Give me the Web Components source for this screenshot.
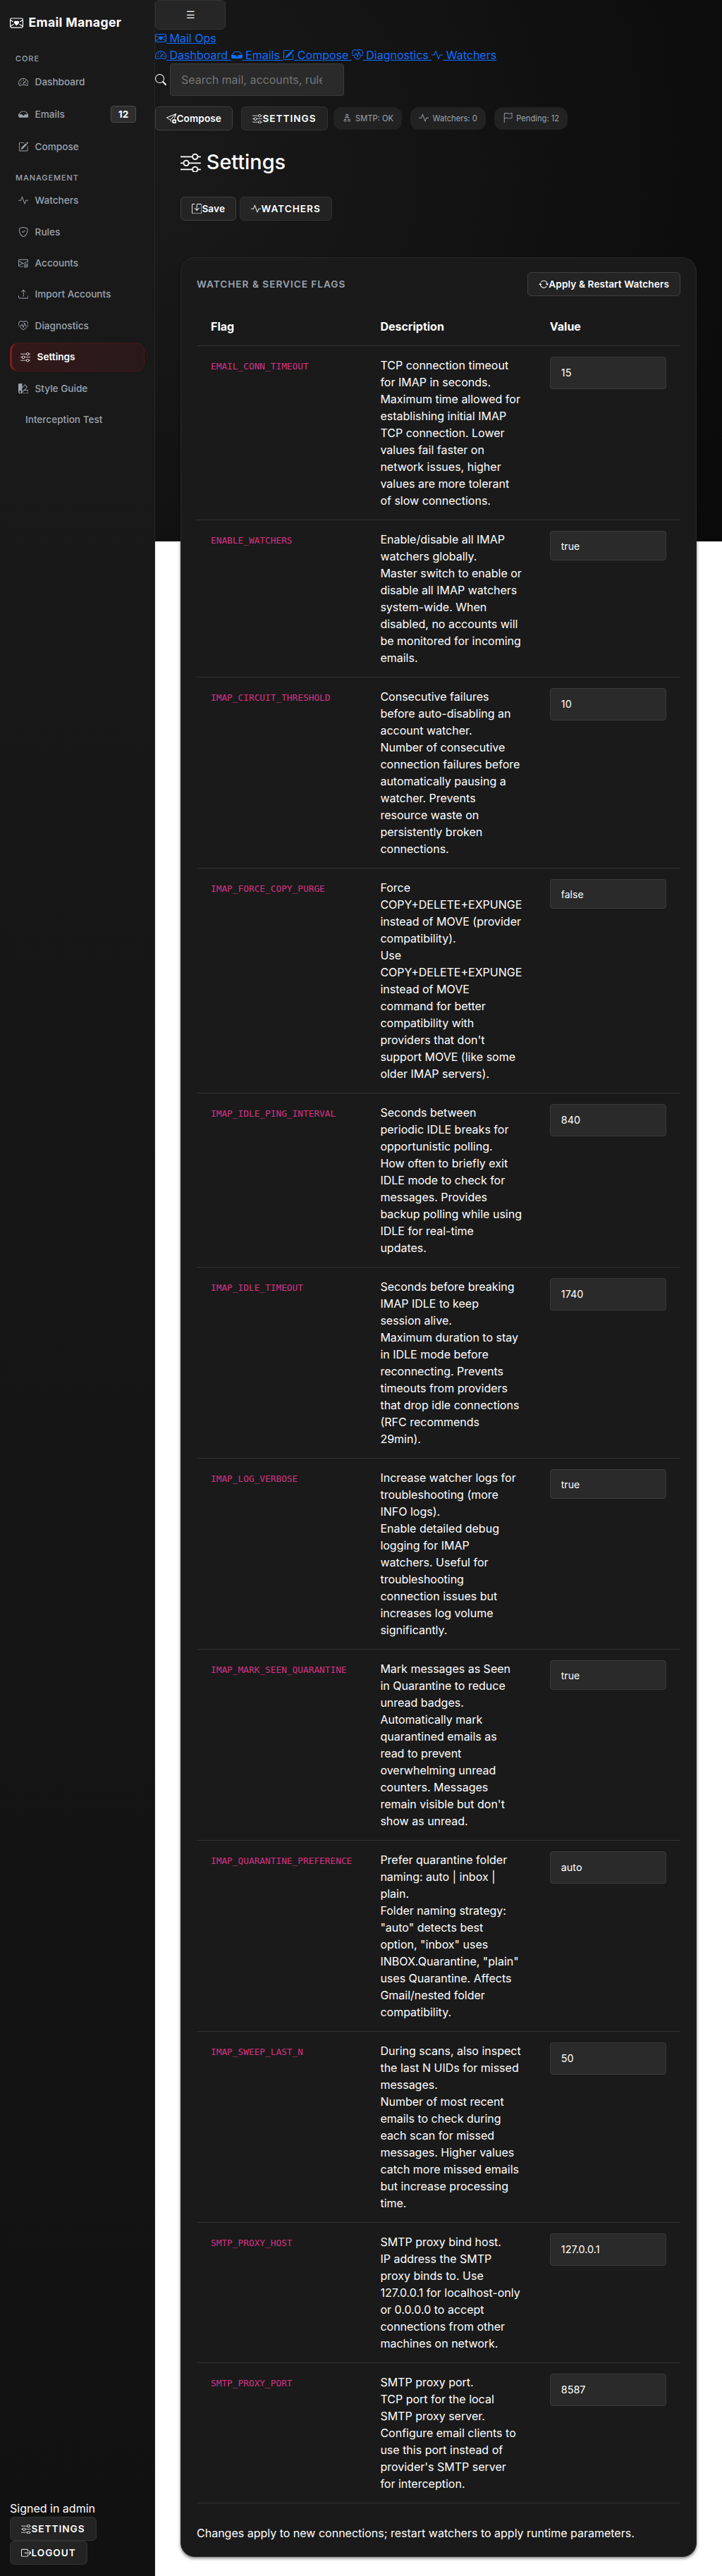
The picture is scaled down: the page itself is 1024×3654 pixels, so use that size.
<!DOCTYPE html>
<html lang="en">
<head>
<meta charset="utf-8">
<title>Email Manager - Settings</title>
<style>
html{background:#fff}
body{margin:0;font-family:Inter,"Liberation Sans",sans-serif;font-size:16px;line-height:24px;color:#fff}
</style>
</head>
<body>
<mail-app></mail-app>
<script>
const ICONS={
speed:'<path d="M8 4a.5.5 0 0 1 .5.5V6a.5.5 0 0 1-1 0V4.500A.5.5 0 0 1 8 4zM3.732 5.732a.5.5 0 0 1 .707 0l.915.914a.5.5 0 1 1-.708.708l-.914-.915a.5.5 0 0 1 0-.707zM2 10a.5.5 0 0 1 .5-.5h1.586a.5.5 0 0 1 0 1H2.500A.5.5 0 0 1 2 10zm9.5 0a.5.5 0 0 1 .5-.5h1.5a.5.5 0 0 1 0 1H12a.5.5 0 0 1-.5-.5zm.754-4.246a.389.389 0 0 0-.527-.02L7.547 9.31a.91.91 0 1 0 1.302 1.258l3.434-4.297a.389.389 0 0 0-.029-.518z"/><path fill-rule="evenodd" d="M0 10a8 8 0 1 1 15.547 2.661c-.442 1.253-1.845 1.602-2.932 1.25C11.309 13.488 9.475 13 8 13c-1.474 0-3.31.488-4.615.911-1.087.352-2.49.003-2.932-1.25A7.988 7.988 0 0 1 0 10zm8-7a7 7 0 0 0-6.603 9.329c.203.575.923.876 1.68.63C4.397 12.533 6.358 12 8 12s3.604.532 4.923.96c.757.245 1.477-.056 1.68-.631A7 7 0 0 0 8 3z"/>',
inbox:'<path d="M4.98 4a.5.5 0 0 0-.39.188L1.54 8H6a.5.5 0 0 1 .5.5 1.5 1.5 0 1 0 3 0A.5.5 0 0 1 10 8h4.46l-3.05-3.812A.5.5 0 0 0 11.02 4zm-1.17-.437A1.5 1.5 0 0 1 4.98 3h6.04a1.5 1.5 0 0 1 1.17.563l3.7 4.625a.5.5 0 0 1 .106.374l-.39 3.124A1.5 1.5 0 0 1 14.117 13H1.883a1.5 1.5 0 0 1-1.489-1.314l-.39-3.124a.5.5 0 0 1 .106-.374z"/>',
pencil:'<path d="M15.502 1.94a.5.5 0 0 1 0 .706L14.459 3.69l-2-2L13.502.646a.5.5 0 0 1 .707 0l1.293 1.293zm-1.75 2.456-2-2L4.939 9.21a.5.5 0 0 0-.121.196l-.805 2.414a.25.25 0 0 0 .316.316l2.414-.805a.5.5 0 0 0 .196-.12l6.813-6.814z"/><path fill-rule="evenodd" d="M1 13.5A1.5 1.5 0 0 0 2.5 15h11a1.5 1.5 0 0 0 1.5-1.5v-6a.5.5 0 0 0-1 0v6a.5.5 0 0 1-.5.5h-11a.5.5 0 0 1-.5-.5v-11a.5.5 0 0 1 .5-.5H9a.5.5 0 0 0 0-1H2.5A1.5 1.5 0 0 0 1 2.5v11z"/>',
activity:'<path fill-rule="evenodd" d="M6 2a.5.5 0 0 1 .47.33L10 12.036l1.53-4.208A.5.5 0 0 1 12 7.5h3.5a.5.5 0 0 1 0 1h-3.15l-1.88 5.17a.5.5 0 0 1-.94 0L6 3.964 4.47 8.171A.5.5 0 0 1 4 8.500H.5a.5.5 0 0 1 0-1h3.15l1.88-5.17A.5.5 0 0 1 6 2"/>',
shield:'<path d="M5.338 1.59a61.44 61.44 0 0 0-2.837.856.481.481 0 0 0-.328.39c-.554 4.157.726 7.19 2.253 9.188a10.725 10.725 0 0 0 2.287 2.233c.346.244.652.42.893.533.12.057.218.095.293.118a.55.55 0 0 0 .101.025.615.615 0 0 0 .1-.025c.076-.023.174-.061.294-.118.24-.113.547-.29.893-.533a10.726 10.726 0 0 0 2.287-2.233c1.527-1.997 2.807-5.031 2.253-9.188a.48.48 0 0 0-.328-.39c-.651-.213-1.75-.56-2.837-.855C9.552 1.29 8.531 1.067 8 1.067c-.53 0-1.552.223-2.662.524zM5.072.56C6.157.265 7.31 0 8 0s1.843.265 2.928.56c1.11.3 2.229.655 2.887.87a1.54 1.54 0 0 1 1.044 1.262c.596 4.477-.787 7.795-2.465 9.99a11.775 11.775 0 0 1-2.517 2.453 7.159 7.159 0 0 1-1.048.625c-.28.132-.581.24-.829.24s-.548-.108-.829-.24a7.158 7.158 0 0 1-1.048-.625 11.777 11.777 0 0 1-2.517-2.453C1.928 10.487.545 7.169 1.141 2.692A1.54 1.54 0 0 1 2.185 1.43 62.456 62.456 0 0 1 5.072.56z"/><path d="M10.854 5.146a.5.5 0 0 1 0 .708l-3 3a.5.5 0 0 1-.708 0l-1.5-1.5a.5.5 0 1 1 .708-.708L7.5 7.793l2.646-2.647a.5.5 0 0 1 .708 0z"/>',
at:'<path d="M2 2a2 2 0 0 0-2 2v8.010A2 2 0 0 0 2 14h5.5a.5.5 0 0 0 0-1H2a1 1 0 0 1-.966-.741l5.64-3.471L8 9.583l7-4.2V8.500a.5.5 0 0 0 1 0V4a2 2 0 0 0-2-2zm3.708 6.208L1 11.105V5.383zM1 4.217V4a1 1 0 0 1 1-1h12a1 1 0 0 1 1 1v.217l-7 4.2z"/><path d="M14.247 14.269c1.01 0 1.587-.857 1.587-2.025v-.21C15.834 10.43 14.64 9 12.52 9h-.035C10.42 9 9 10.36 9 12.432v.214C9 14.82 10.438 16 12.358 16h.044c.594 0 1.018-.074 1.237-.175v-.73c-.245.11-.673.18-1.18.18h-.044c-1.334 0-2.571-.788-2.571-2.655v-.157c0-1.657 1.058-2.724 2.64-2.724h.04c1.535 0 2.484 1.05 2.484 2.326v.118c0 .975-.324 1.39-.639 1.39-.232 0-.41-.148-.41-.42v-2.19h-.906v.569h-.03c-.084-.298-.368-.63-.954-.63-.778 0-1.259.555-1.259 1.4v.528c0 .892.49 1.434 1.26 1.434.471 0 .896-.227 1.014-.643h.043c.118.42.617.648 1.12.648m-2.453-1.588v-.227c0-.546.227-.791.573-.791.297 0 .572.192.572.708v.367c0 .573-.253.744-.564.744-.354 0-.581-.215-.581-.8Z"/>',
upload:'<path d="M.5 9.9a.5.5 0 0 1 .5.5v2.5a1 1 0 0 0 1 1h12a1 1 0 0 0 1-1v-2.5a.5.5 0 0 1 1 0v2.5a2 2 0 0 1-2 2H2a2 2 0 0 1-2-2v-2.5a.5.5 0 0 1 .5-.5z"/><path d="M7.646 1.146a.5.5 0 0 1 .708 0l3 3a.5.5 0 0 1-.708.708L8.5 2.707V11.500a.5.5 0 0 1-1 0V2.707L5.354 4.854a.5.5 0 1 1-.708-.708l3-3z"/>',
pulse:'<path d="m8 2.748-.717-.737C5.6.281 2.514.878 1.4 3.053.918 3.995.78 5.323 1.508 7H.43c-2.128-5.697 4.165-8.83 7.394-5.857q.09.083.176.171a3 3 0 0 1 .176-.17c3.23-2.974 9.522.159 7.394 5.856h-1.078c.728-1.677.59-3.005.108-3.947C13.486.878 10.4.28 8.717 2.01zM2.212 10h1.315C4.593 11.183 6.05 12.458 8 13.795c1.949-1.337 3.407-2.612 4.473-3.795h1.315c-1.265 1.566-3.14 3.25-5.788 5-2.648-1.75-4.523-3.434-5.788-5"/><path d="M10.464 3.314a.5.5 0 0 0-.945.049L7.921 8.956 6.464 5.314a.5.5 0 0 0-.88-.091L3.732 8H.5a.5.5 0 0 0 0 1H4a.5.5 0 0 0 .416-.223l1.473-2.209 1.647 4.118a.5.5 0 0 0 .945-.049l1.598-5.593 1.457 3.642A.5.5 0 0 0 12 9h3.5a.5.5 0 0 0 0-1h-3.162z"/>',
sliders:'<path fill-rule="evenodd" d="M11.5 2a1.5 1.5 0 1 0 0 3 1.5 1.5 0 0 0 0-3M9.05 3a2.5 2.5 0 0 1 4.9 0H16v1h-2.05a2.5 2.5 0 0 1-4.9 0H0V3zM4.5 7a1.5 1.5 0 1 0 0 3 1.5 1.5 0 0 0 0-3M2.05 8a2.5 2.5 0 0 1 4.9 0H16v1H6.95a2.5 2.5 0 0 1-4.9 0H0V8zm9.45 4a1.5 1.5 0 1 0 0 3 1.5 1.5 0 0 0 0-3m-2.45 1a2.5 2.5 0 0 1 4.9 0H16v1h-2.05a2.5 2.5 0 0 1-4.9 0H0v-1z"/>',
palette:'<path d="M0 .5A.5.5 0 0 1 .5 0h5a.5.5 0 0 1 .5.5v5.277l4.147-4.131a.5.5 0 0 1 .707 0l3.535 3.536a.5.5 0 0 1 0 .708L10.261 10H15.500a.5.5 0 0 1 .5.5v5a.5.5 0 0 1-.5.5H3a2.99 2.99 0 0 1-2.121-.879A2.99 2.99 0 0 1 0 13.044m6-.21 7.328-7.3-2.829-2.828L6 7.188v5.647zM4.500 13a1.500 1.500 0 1 0-3 0 1.500 1.500 0 0 0 3 0zM15 15v-4H9.258l-4.015 4H15zM0 .5v12.495V.5z"/>',
heart:'<path fill-rule="evenodd" d="M0 4a2 2 0 0 1 2-2h12a2 2 0 0 1 2 2v8a2 2 0 0 1-2 2H2a2 2 0 0 1-2-2zm2-1a1 1 0 0 0-1 1v.217l3.235 1.94a2.76 2.76 0 0 0-.233 1.027L1 5.384v5.721l3.453-2.124q.219.416.55.835l-3.97 2.443A1 1 0 0 0 2 13h12a1 1 0 0 0 .966-.741l-3.97-2.443q.33-.418.55-.835L15 11.105V5.383l-3.002 1.801a2.76 2.76 0 0 0-.233-1.026L15 4.217V4a1 1 0 0 0-1-1zm6 2.993c1.664-1.711 5.825 1.283 0 5.132-5.825-3.85-1.664-6.843 0-5.132"/>',
search:'<path d="M11.742 10.344a6.5 6.5 0 1 0-1.397 1.398h-.001c.03.04.062.078.098.115l3.85 3.85a1 1 0 0 0 1.415-1.414l-3.85-3.85a1.007 1.007 0 0 0-.115-.1zM12 6.500a5.5 5.5 0 1 1-11 0 5.5 5.5 0 0 1 11 0z"/>',
send:'<path d="M15.964.686a.5.5 0 0 0-.65-.65L.767 5.855a.75.75 0 0 0-.124 1.329l4.995 3.178 1.531 2.406a.5.5 0 0 0 .844-.536L6.637 10.07l7.494-7.494-1.895 4.738a.5.5 0 1 0 .928.372zm-2.54 1.183L5.93 9.363 1.591 6.602z"/><path d="M16 12.5a3.5 3.5 0 1 1-7 0 3.5 3.5 0 0 1 7 0m-3.5-2a.5.5 0 0 0-.5.5v1h-1a.5.5 0 0 0 0 1h1v1a.5.5 0 0 0 1 0v-1h1a.5.5 0 0 0 0-1h-1v-1a.5.5 0 0 0-.5-.5"/>',
diagram:'<path fill-rule="evenodd" d="M6 3.5A1.5 1.5 0 0 1 7.5 2h1A1.5 1.5 0 0 1 10 3.5v1A1.5 1.5 0 0 1 8.5 6v1H11a.5.5 0 0 1 .5.5v1a.5.5 0 0 1-1 0V8h-5v.5a.5.5 0 0 1-1 0v-1A.5.5 0 0 1 5 7h2.5V6A1.5 1.5 0 0 1 6 4.5zM8.5 5a.5.5 0 0 0 .5-.5v-1a.5.5 0 0 0-.5-.5h-1a.5.5 0 0 0-.5.5v1a.5.5 0 0 0 .5.5zM3 11.5A1.5 1.5 0 0 1 4.5 10h1A1.5 1.5 0 0 1 7 11.5v1A1.5 1.5 0 0 1 5.5 14h-1A1.5 1.5 0 0 1 3 12.5zm1.5-.5a.5.5 0 0 0-.5.5v1a.5.5 0 0 0 .5.5h1a.5.5 0 0 0 .5-.5v-1a.5.5 0 0 0-.5-.5zm4.5.5a1.5 1.5 0 0 1 1.5-1.5h1a1.5 1.5 0 0 1 1.5 1.5v1a1.5 1.5 0 0 1-1.5 1.5h-1A1.5 1.5 0 0 1 9 12.5zm1.5-.5a.5.5 0 0 0-.5.5v1a.5.5 0 0 0 .5.5h1a.5.5 0 0 0 .5-.5v-1a.5.5 0 0 0-.5-.5z"/>',
flag:'<path d="M14.778.085A.5.5 0 0 1 15 .5V8a.5.5 0 0 1-.314.464L14.5 8l.186.464-.003.001-.006.003-.023.009a12 12 0 0 1-.397.15c-.264.095-.631.223-1.047.35-.816.252-1.879.523-2.71.523-.847 0-1.548-.28-2.158-.525l-.028-.01C7.68 8.71 7.14 8.5 6.5 8.5c-.7 0-1.638.23-2.437.477A20 20 0 0 0 3 9.342V15.500a.5.5 0 0 1-1 0V.5a.5.5 0 0 1 1 0v.282c.226-.079.496-.17.79-.26C4.606.272 5.67 0 6.5 0c.84 0 1.524.277 2.121.519l.043.018C9.286.788 9.828 1 10.5 1c.7 0 1.638-.23 2.437-.477a20 20 0 0 0 1.349-.476l.019-.007.004-.002h.001M14 1.221c-.22.078-.48.167-.766.255-.81.252-1.872.523-2.734.523-.886 0-1.592-.286-2.203-.534l-.008-.003C7.662 1.21 7.139 1 6.5 1c-.669 0-1.606.229-2.415.478A21 21 0 0 0 3 1.845v6.433c.22-.078.48-.167.766-.255C4.576 7.77 5.638 7.5 6.5 7.5c.847 0 1.548.28 2.158.525l.028.01C9.32 8.29 9.86 8.5 10.5 8.5c.668 0 1.606-.229 2.415-.478A21 21 0 0 0 14 7.655V1.222z"/>',
repeat:'<path d="M11.534 7h3.932a.25.25 0 0 1 .192.41l-1.966 2.36a.25.25 0 0 1-.384 0l-1.966-2.36a.25.25 0 0 1 .192-.41zm-11 2h3.932a.25.25 0 0 0 .192-.41L2.692 6.23a.25.25 0 0 0-.384 0L.342 8.59A.25.25 0 0 0 .534 9z"/><path d="M8 3c-1.552 0-2.94.707-3.857 1.818a.5.5 0 1 1-.771-.636A6.002 6.002 0 0 1 13.917 7H12.9A5.002 5.002 0 0 0 8 3zM3.1 9a5.002 5.002 0 0 0 8.757 2.182.5.5 0 1 1 .771.636A6.002 6.002 0 0 1 2.083 9H3.1z"/>',
save:'<path d="M2 1a1 1 0 0 0-1 1v12a1 1 0 0 0 1 1h12a1 1 0 0 0 1-1V2a1 1 0 0 0-1-1H9.5a1 1 0 0 0-1 1v7.293l2.646-2.647a.5.5 0 0 1 .708.708l-3.5 3.5a.5.5 0 0 1-.708 0l-3.5-3.5a.5.5 0 1 1 .708-.708L7.5 9.293V2a2 2 0 0 1 2-2H14a2 2 0 0 1 2 2v12a2 2 0 0 1-2 2H2a2 2 0 0 1-2-2V2a2 2 0 0 1 2-2h2.5a.5.5 0 0 1 0 1z"/>',
exit:'<path d="M10 12.5a.5.5 0 0 1-.5.5h-8a.5.5 0 0 1-.5-.5v-9a.5.5 0 0 1 .5-.5h8a.5.5 0 0 1 .5.5v2a.5.5 0 0 0 1 0v-2A1.5 1.5 0 0 0 9.5 2h-8A1.5 1.5 0 0 0 0 3.5v9A1.5 1.5 0 0 0 1.5 14h8a1.5 1.5 0 0 0 1.5-1.5v-2a.5.5 0 0 0-1 0z"/><path d="M15.854 8.354a.5.5 0 0 0 0-.708l-3-3a.5.5 0 0 0-.708.708L14.293 7.5H5.5a.5.5 0 0 0 0 1h8.793l-2.147 2.146a.5.5 0 0 0 .708.708z"/>'
};
function define(name, render){
  customElements.define(name, class extends HTMLElement{
    connectedCallback(){
      if(this.shadowRoot) return;
      this.attachShadow({mode:'open'}).innerHTML = render(this);
    }
  });
}
define('m-icon', el => `<style>:host{display:inline-block;width:1em;height:1em;line-height:1;vertical-align:-.125em;flex:none}svg{display:block;width:100%;height:100%}</style><svg viewBox="0 0 16 16" fill="currentColor">${ICONS[el.getAttribute('name')]}</svg>`);

define('m-button', el => `<style>
:host{display:inline-flex;align-items:center;justify-content:center;box-sizing:border-box;height:34px;padding:0 15px;border:1px solid #333;border-radius:6px;background:linear-gradient(135deg,#262626,#222);color:#fff;font-size:13.6px;line-height:20.4px;font-weight:600;letter-spacing:.12px;white-space:nowrap}
:host([kind=solid]){border-color:#404040;background:#242424}
:host([kind=caps]){text-transform:uppercase;letter-spacing:1px}
::slotted(m-icon){font-size:14.4px}
</style><slot></slot>`);

define('m-pill', el => `<style>
:host{display:inline-flex;align-items:center;gap:5px;box-sizing:border-box;height:32px;padding:0 12px;border-radius:12px;background:#222;color:#9ca3af;font-size:11.2px;line-height:17px;white-space:nowrap}
m-icon{font-size:14.4px;margin-top:-2px}
</style><m-icon name="${el.getAttribute('icon')}"></m-icon><slot></slot>`);

define('nav-item', el => `<style>
:host{display:flex;align-items:center;gap:9.2px;box-sizing:border-box;height:40.4px;margin-bottom:4px;padding:0 12px;border-radius:12px;color:#9ca3af;font-size:13.6px;line-height:20.4px;font-weight:500}
:host([tall]){height:43.6px}
:host([active]){color:#fff;font-weight:600;background:linear-gradient(135deg,#331819,#281919);border:1px solid #4a1717;border-left:3px solid #7f1d1d}
m-icon{font-size:14.4px}
::slotted(b){margin-left:auto;box-sizing:border-box;height:24px;width:36px;border:1px solid #4a4a4a;border-radius:4px;background:#2e2e2e;color:#fff;font-size:13.6px;line-height:22px;font-weight:700;text-align:center}
</style>${el.hasAttribute('icon')?`<m-icon name="${el.getAttribute('icon')}"></m-icon>`:''}<slot></slot>`);

define('side-bar', () => `<style>
:host{display:flex;flex-direction:column;box-sizing:border-box;width:220px;flex:none;padding:0 14px 16px;border-right:1px solid #262626;background:linear-gradient(180deg,#1a1a1a,#111)}
.brand{display:flex;align-items:center;gap:7.5px;height:64px;font-size:17.6px;font-weight:700;letter-spacing:.35px}
.brand m-icon{font-size:19px}
h6{margin:0;padding:0 8px;font-size:11px;line-height:17px;font-weight:500;letter-spacing:.93px;color:#9ca3af}
.core{margin:11px 0 4px}.mgmt{margin-top:11.3px;margin-bottom:3.6px}
.foot{margin-top:auto;display:flex;flex-direction:column;align-items:flex-start}
</style>
<div class="brand"><m-icon name="heart"></m-icon><span>Email Manager</span></div>
<h6 class="core">CORE</h6>
<nav><nav-item icon="speed">Dashboard</nav-item><nav-item icon="inbox" tall>Emails<b>12</b></nav-item><nav-item icon="pencil">Compose</nav-item></nav>
<h6 class="mgmt">MANAGEMENT</h6>
<nav><nav-item icon="activity">Watchers</nav-item><nav-item icon="shield">Rules</nav-item><nav-item icon="at">Accounts</nav-item><nav-item icon="upload">Import Accounts</nav-item><nav-item icon="pulse">Diagnostics</nav-item><nav-item icon="sliders" active>Settings</nav-item><nav-item icon="palette">Style Guide</nav-item><nav-item style="padding-left:22px">Interception Test</nav-item></nav>
<div class="foot"><span>Signed in admin</span><m-button kind="caps"><m-icon name="sliders"></m-icon>Settings</m-button><m-button kind="caps"><m-icon name="exit"></m-icon>Logout</m-button></div>`);

define('top-bar', () => `<style>
:host{display:block}
a{color:#0d6efd;text-decoration:underline}
.toggle{display:flex;align-items:center;justify-content:center;box-sizing:border-box;width:100px;height:42px;border:1px solid #333;border-radius:6px;background:#262626;font-size:13.6px}
.search{display:flex;align-items:center;gap:5px;height:46px}
input{box-sizing:border-box;width:247px;height:46px;padding:0 30px 0 15px;border:1px solid #3a3a3a;border-radius:4px;background:#2a2a2a;color:#fff;font:16px Inter,sans-serif}
input::placeholder{color:#757575}
.row{display:flex;align-items:center;gap:12px;margin-top:15px}
.row m-pill:nth-of-type(1){margin-left:-4px}
</style>
<div class="toggle">☰</div>
<div><a><m-icon name="heart"></m-icon> Mail Ops</a></div>
<div><a><m-icon name="speed"></m-icon> Dashboard </a><a><m-icon name="inbox"></m-icon> Emails </a><a><m-icon name="pencil"></m-icon> Compose </a><a><m-icon name="pulse"></m-icon> Diagnostics </a><a><m-icon name="activity"></m-icon> Watchers</a></div>
<div class="search"><m-icon name="search"></m-icon><input placeholder="Search mail, accounts, rules"></div>
<div class="row"><m-button kind="solid"><m-icon name="send"></m-icon>Compose</m-button><m-button kind="caps"><m-icon name="sliders"></m-icon>Settings</m-button><m-pill icon="diagram">SMTP: OK</m-pill><m-pill icon="activity">Watchers: 0</m-pill><m-pill icon="flag">Pending: 12</m-pill></div>`);

define('flag-row', el => `<style>
:host{display:grid;grid-template-columns:240.4px 240.4px 1fr;border-bottom:1px solid #333}
div{padding:15px 20px}
.desc{white-space:nowrap}
code{font:12.8px/19px "DejaVu Sans Mono",monospace;color:#d63384}
input{display:block;box-sizing:border-box;width:165px;height:${el.hasAttribute('select')?42.4:45.6}px;padding:0 15px;border:1px solid #3a3a3a;border-radius:4px;background:#2a2a2a;color:#fff;font:${el.hasAttribute('select')?14:14.4}px Inter,sans-serif}
</style><div><code>${el.getAttribute('flag')}</code></div><div class="desc"><slot></slot></div><div><input value="${el.getAttribute('value')}"></div>`);

/* name, value, description (a bar marks a line end; "~" stands for a literal bar), select */
const FLAGS=[
['EMAIL_CONN_TIMEOUT','15','TCP connection timeout|for IMAP in seconds.|Maximum time allowed for|establishing initial IMAP|TCP connection. Lower|values fail faster on|network issues, higher|values are more tolerant|of slow connections.'],
['ENABLE_WATCHERS','true','Enable/disable all IMAP|watchers globally.|Master switch to enable or|disable all IMAP watchers|system-wide. When|disabled, no accounts will|be monitored for incoming|emails.',1],
['IMAP_CIRCUIT_THRESHOLD','10','Consecutive failures|before auto-disabling an|account watcher.|Number of consecutive|connection failures before|automatically pausing a|watcher. Prevents|resource waste on|persistently broken|connections.'],
['IMAP_FORCE_COPY_PURGE','false','Force|COPY+DELETE+EXPUNGE|instead of MOVE (provider|compatibility).|Use|COPY+DELETE+EXPUNGE|instead of MOVE|command for better|compatibility with|providers that don\'t|support MOVE (like some|older IMAP servers).',1],
['IMAP_IDLE_PING_INTERVAL','840','Seconds between|periodic IDLE breaks for|opportunistic polling.|How often to briefly exit|IDLE mode to check for|messages. Provides|backup polling while using|IDLE for real-time|updates.'],
['IMAP_IDLE_TIMEOUT','1740','Seconds before breaking|IMAP IDLE to keep|session alive.|Maximum duration to stay|in IDLE mode before|reconnecting. Prevents|timeouts from providers|that drop idle connections|(RFC recommends|29min).'],
['IMAP_LOG_VERBOSE','true','Increase watcher logs for|troubleshooting (more|INFO logs).|Enable detailed debug|logging for IMAP|watchers. Useful for|troubleshooting|connection issues but|increases log volume|significantly.',1],
['IMAP_MARK_SEEN_QUARANTINE','true','Mark messages as Seen|in Quarantine to reduce|unread badges.|Automatically mark|quarantined emails as|read to prevent|overwhelming unread|counters. Messages|remain visible but don\'t|show as unread.',1],
['IMAP_QUARANTINE_PREFERENCE','auto','Prefer quarantine folder|naming: auto ~ inbox ~|plain.|Folder naming strategy:|"auto" detects best|option, "inbox" uses|INBOX.Quarantine, "plain"|uses Quarantine. Affects|Gmail/nested folder|compatibility.'],
['IMAP_SWEEP_LAST_N','50','During scans, also inspect|the last N UIDs for missed|messages.|Number of most recent|emails to check during|each scan for missed|messages. Higher values|catch more missed emails|but increase processing|time.'],
['SMTP_PROXY_HOST','127.0.0.1','SMTP proxy bind host.|IP address the SMTP|proxy binds to. Use|127.0.0.1 for localhost-only|or 0.0.0.0 to accept|connections from other|machines on network.'],
['SMTP_PROXY_PORT','8587','SMTP proxy port.|TCP port for the local|SMTP proxy server.|Configure email clients to|use this port instead of|provider\'s SMTP server|for interception.']
];

define('settings-card', () => `<style>
:host{display:block;box-sizing:border-box;width:732px;border:1px solid #2a2a2a;border-radius:20px;padding:20px 22px 21px;background:#1a1a1a;box-shadow:0 2px 4px rgba(0,0,0,.5)}
header{display:flex;justify-content:space-between;align-items:center;height:34px}
h2{margin:0;font-size:13.6px;line-height:20px;font-weight:600;letter-spacing:1px;color:#9ca3af}
.head{display:grid;grid-template-columns:240.4px 240.4px 1fr;border-bottom:1px solid #333;margin-top:16px;font-weight:700}
.head span{padding:15px 20px}
p{margin:30px 0 0}
</style>
<header><h2>WATCHER &amp; SERVICE FLAGS</h2><m-button kind="solid"><m-icon name="repeat"></m-icon>Apply &amp; Restart Watchers</m-button></header>
<div class="head"><span>Flag</span><span>Description</span><span>Value</span></div>
${FLAGS.map(f=>`<flag-row flag="${f[0]}" value="${f[1]}" ${f[3]?'select':''}>${f[2].split('|').join('<br>').replace(/~/g,'|')}</flag-row>`).join('')}
<p>Changes apply to new connections; restart watchers to apply runtime parameters.</p>`);

define('mail-app', () => `<style>
:host{display:flex;height:3654px}
main{flex:1;min-width:0;background:radial-gradient(circle 980px at -15px 230px,#1a1a1a,#0a0a0a) 0 0/100% 768px no-repeat}
.page{padding:26px 36px 0}
h1{display:flex;align-items:center;gap:8px;margin:0;font-size:28.8px;line-height:38px;font-weight:500}
.actions{display:flex;gap:5px;margin:30px 0 52px}
</style>
<side-bar></side-bar>
<main><top-bar></top-bar><div class="page"><h1><m-icon name="sliders"></m-icon><span>Settings</span></h1>
<div class="actions"><m-button kind="solid"><m-icon name="save"></m-icon>Save</m-button><m-button kind="caps"><m-icon name="activity"></m-icon>Watchers</m-button></div>
<settings-card></settings-card></div></main>`);
</script>
</body>
</html>
